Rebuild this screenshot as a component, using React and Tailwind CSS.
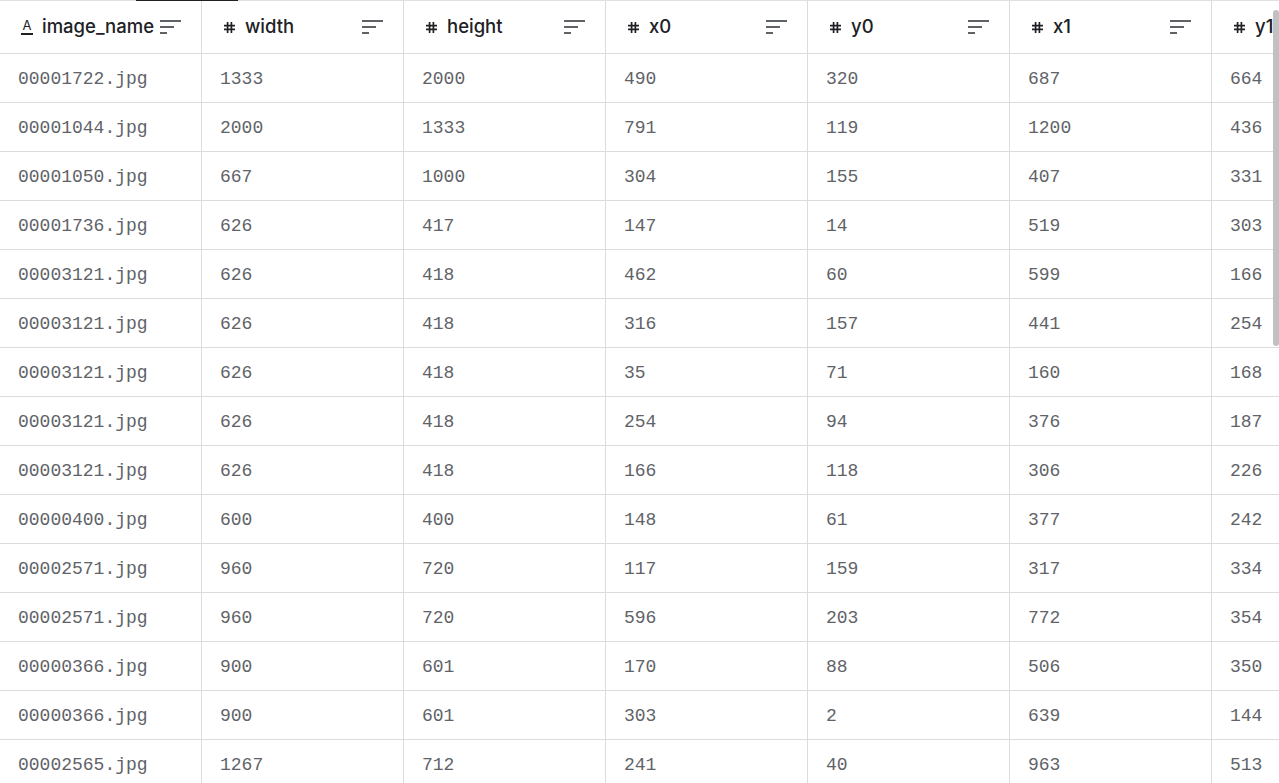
import React from 'react';

const columns = [
  { key: 'image_name', type: 'string' },
  { key: 'width', type: 'number' },
  { key: 'height', type: 'number' },
  { key: 'x0', type: 'number' },
  { key: 'y0', type: 'number' },
  { key: 'x1', type: 'number' },
  { key: 'y1', type: 'number' },
];

const rows = [
  ['00001722.jpg', 1333, 2000, 490, 320, 687, 664],
  ['00001044.jpg', 2000, 1333, 791, 119, 1200, 436],
  ['00001050.jpg', 667, 1000, 304, 155, 407, 331],
  ['00001736.jpg', 626, 417, 147, 14, 519, 303],
  ['00003121.jpg', 626, 418, 462, 60, 599, 166],
  ['00003121.jpg', 626, 418, 316, 157, 441, 254],
  ['00003121.jpg', 626, 418, 35, 71, 160, 168],
  ['00003121.jpg', 626, 418, 254, 94, 376, 187],
  ['00003121.jpg', 626, 418, 166, 118, 306, 226],
  ['00000400.jpg', 600, 400, 148, 61, 377, 242],
  ['00002571.jpg', 960, 720, 117, 159, 317, 334],
  ['00002571.jpg', 960, 720, 596, 203, 772, 354],
  ['00000366.jpg', 900, 601, 170, 88, 506, 350],
  ['00000366.jpg', 900, 601, 303, 2, 639, 144],
  ['00002565.jpg', 1267, 712, 241, 40, 963, 513],
];

const HashIcon = () => (
  <svg width="13" height="13" viewBox="0 0 13 13" fill="none" stroke="#202124" strokeWidth="1.7">
    <path d="M4.6 1v11M8.4 1v11M1 4.6h11M1 8.4h11" />
  </svg>
);

const StringIcon = () => (
  <span className="flex flex-col items-center leading-none text-[#202124] text-[13px] font-['Inter',sans-serif]">
    <span>A</span>
    <span className="mt-[1px] h-[1.5px] w-[12px] bg-[#202124]" />
  </span>
);

const SortIcon = () => (
  <svg width="21" height="16" viewBox="0 0 21 16" fill="none" stroke="#5f6368" strokeWidth="2">
    <path d="M0 2h21M0 8h14M0 14h7" />
  </svg>
);

export default function App() {
  return (
    <div className="relative w-[1279px] h-[783px] overflow-hidden bg-white">
      {/* tab underline */}
      <div className="flex h-[1px]">
        <div className="w-[136px] bg-[#e0e0e0]" />
        <div className="w-[102px] bg-[#202124]" />
        <div className="flex-1 bg-[#e0e0e0]" />
      </div>

      {/* header */}
      <div className="flex h-[53px] border-b border-[#dadce0]">
        {columns.map((col) => (
          <div
            key={col.key}
            className="flex w-[202px] shrink-0 items-center justify-between border-r border-[#dadce0] pl-[21px] pr-[20px]"
          >
            <div className="flex items-center gap-[9px]">
              {col.type === 'string' ? <StringIcon /> : <HashIcon />}
              <span className="font-['Inter',sans-serif] text-[18.5px] font-medium text-[#202124]">{col.key}</span>
            </div>
            <SortIcon />
          </div>
        ))}
      </div>

      {/* body */}
      {rows.map((row, i) => (
        <div key={i} className="flex h-[49px] border-b border-[#dadce0]">
          {row.map((cell, j) => (
            <div
              key={j}
              className="flex w-[202px] shrink-0 items-center border-r border-[#dadce0] pl-[18px] pt-[2px] font-['Liberation_Mono',monospace] text-[18px] text-[#5f6368]"
            >
              {cell}
            </div>
          ))}
        </div>
      ))}

      {/* scrollbar */}
      <div className="absolute right-0 top-[10px] h-[336px] w-[6px] rounded-[3px] bg-[#c1c1c1]" />
    </div>
  );
}
